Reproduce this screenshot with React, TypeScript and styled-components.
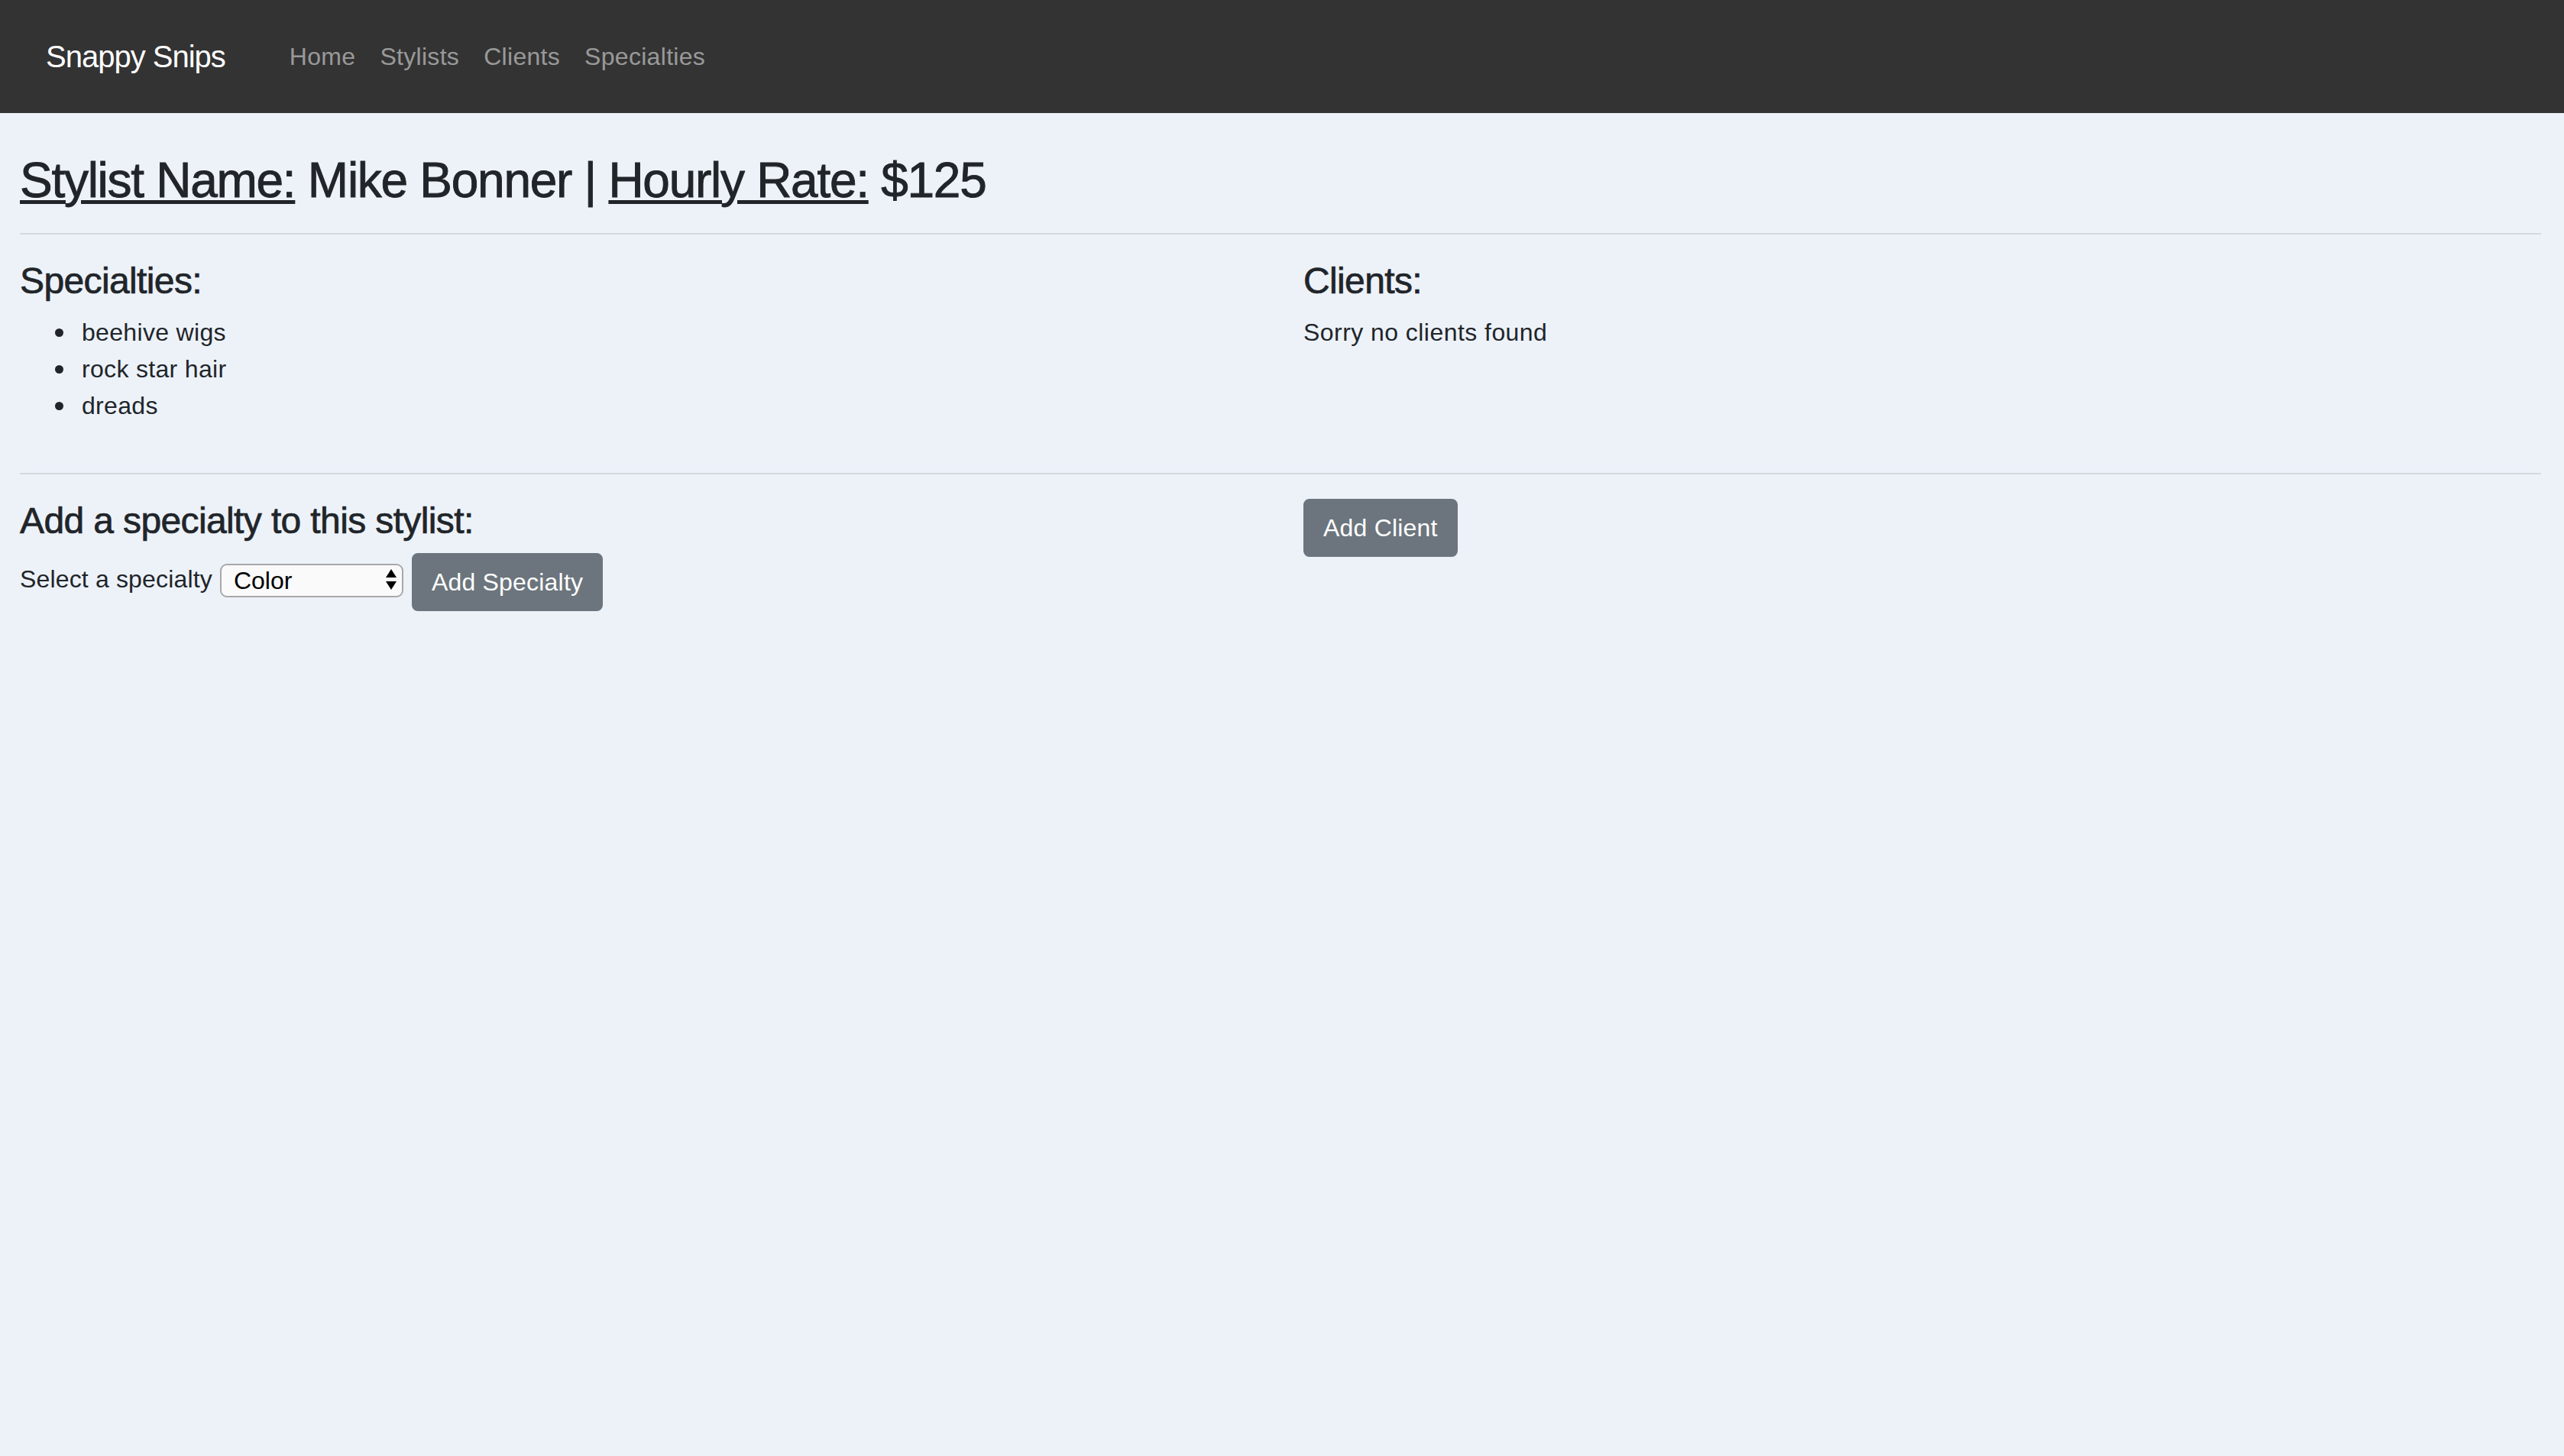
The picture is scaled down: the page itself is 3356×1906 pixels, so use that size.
import React from "react";
import styled, { createGlobalStyle } from "styled-components";

const GlobalStyle = createGlobalStyle`
  html, body {
    margin: 0;
    padding: 0;
    background: #edf2f9;
  }
  body {
    font-family: "Liberation Sans", Arial, sans-serif;
    font-size: 32px;
    line-height: 48px;
    color: #212529;
  }
  * { box-sizing: border-box; }
`;

const Navbar = styled.nav`
  display: flex;
  align-items: center;
  height: 148px;
  padding: 0 60px;
  background: #333333;
`;

const Brand = styled.a`
  font-size: 40px;
  line-height: 60px;
  letter-spacing: -0.025em;
  color: #ffffff;
  text-decoration: none;
  margin-right: 68px;
  white-space: nowrap;
`;

const NavList = styled.ul`
  display: flex;
  list-style: none;
  margin: 0;
  padding: 0;
`;

const NavLink = styled.a`
  display: block;
  padding: 0 16px;
  font-size: 32px;
  line-height: 48px;
  letter-spacing: 0.3px;
  color: rgba(255, 255, 255, 0.5);
  text-decoration: none;
`;

const Page = styled.main`
  padding: 50px 30px 0 26px;
`;

const Title = styled.h2`
  margin: 0;
  font-size: 64px;
  line-height: 76.8px;
  font-weight: 400;
  letter-spacing: -0.02em;
  -webkit-text-stroke: 0.9px #212529;
  white-space: nowrap;
`;

const Under = styled.u`
  text-decoration-thickness: 5px;
  text-underline-offset: 4px;
`;

const Rule = styled.hr<{ $top: number }>`
  margin: ${(p) => p.$top}px 0 32px;
  border: 0;
  border-top: 2px solid rgba(0, 0, 0, 0.1);
  height: 0;
`;

const Columns = styled.section`
  display: grid;
  grid-template-columns: 1fr 1fr;
  column-gap: 60px;
  align-items: start;
`;

const Column = styled.div`
  min-width: 0;
`;

const SectionHeading = styled.h4<{ $gap: number }>`
  margin: 0 0 ${(p) => p.$gap}px;
  font-size: 48px;
  line-height: 57.6px;
  font-weight: 400;
  letter-spacing: -0.013em;
  -webkit-text-stroke: 0.7px #212529;
  white-space: nowrap;
`;

const List = styled.ul`
  margin: 0;
  padding-left: 81px;
  list-style: none;
  letter-spacing: 0.01em;
`;

const Item = styled.li`
  position: relative;

  &::before {
    content: "";
    position: absolute;
    left: -35px;
    top: 19px;
    width: 11px;
    height: 11px;
    border-radius: 50%;
    background: #212529;
  }
`;

const Text = styled.p`
  margin: 0;
  letter-spacing: 0.014em;
`;

const Form = styled.form`
  display: flex;
  align-items: center;
  gap: 10px;
`;

const Label = styled.label`
  letter-spacing: 0.005em;
  white-space: nowrap;
  margin-bottom: 7px;
`;

const SelectWrap = styled.div`
  position: relative;
  width: 240px;
  height: 44px;
  margin-right: 1px;
  margin-top: -7px;
`;

const Select = styled.select`
  appearance: none;
  -webkit-appearance: none;
  width: 100%;
  height: 100%;
  margin: 0;
  padding: 0 36px 0 16px;
  font-family: "Liberation Sans", Arial, sans-serif;
  font-size: 32px;
  line-height: 40px;
  color: #000000;
  background: #fafafa;
  border: 2px solid #a8a8a8;
  border-radius: 9px;
  outline: none;
`;

const Arrows = styled.svg`
  position: absolute;
  right: 9px;
  top: 9px;
  pointer-events: none;
`;

const Button = styled.button`
  display: inline-block;
  padding: 12px 24px;
  font-family: "Liberation Sans", Arial, sans-serif;
  font-size: 32px;
  line-height: 48px;
  letter-spacing: 0.2px;
  color: #ffffff;
  background: #6c757d;
  border: 2px solid #6c757d;
  border-radius: 8px;
  white-space: nowrap;
  cursor: pointer;
`;

const navItems = ["Home", "Stylists", "Clients", "Specialties"];
const specialties = ["beehive wigs", "rock star hair", "dreads"];

export default function App() {
  return (
    <>
      <GlobalStyle />
      <Navbar>
        <Brand href="#">Snappy Snips</Brand>
        <NavList>
          {navItems.map((item) => (
            <li key={item}>
              <NavLink href="#">{item}</NavLink>
            </li>
          ))}
        </NavList>
      </Navbar>
      <Page>
        <Title>
          <Under>Stylist Name:</Under> Mike Bonner | <Under>Hourly Rate:</Under> $125
        </Title>
        <Rule $top={30} />
        <Columns>
          <Column>
            <SectionHeading $gap={15}>Specialties:</SectionHeading>
            <List>
              {specialties.map((s) => (
                <Item key={s}>{s}</Item>
              ))}
            </List>
          </Column>
          <Column>
            <SectionHeading $gap={15}>Clients:</SectionHeading>
            <Text>Sorry no clients found</Text>
          </Column>
        </Columns>
        <Rule $top={64} />
        <Columns>
          <Column>
            <SectionHeading $gap={13}>Add a specialty to this stylist:</SectionHeading>
            <Form onSubmit={(e) => e.preventDefault()}>
              <Label htmlFor="specialty">Select a specialty</Label>
              <SelectWrap>
                <Select id="specialty" defaultValue="Color">
                  <option>Color</option>
                  <option>Cut</option>
                  <option>Perm</option>
                </Select>
                <Arrows width="14" height="27" viewBox="0 0 14 27">
                  <polygon points="7,0 14,11 0,11" fill="#000" />
                  <polygon points="0,16 14,16 7,27" fill="#000" />
                </Arrows>
              </SelectWrap>
              <Button type="submit">Add Specialty</Button>
            </Form>
          </Column>
          <Column>
            <Button type="button">Add Client</Button>
          </Column>
        </Columns>
      </Page>
    </>
  );
}
